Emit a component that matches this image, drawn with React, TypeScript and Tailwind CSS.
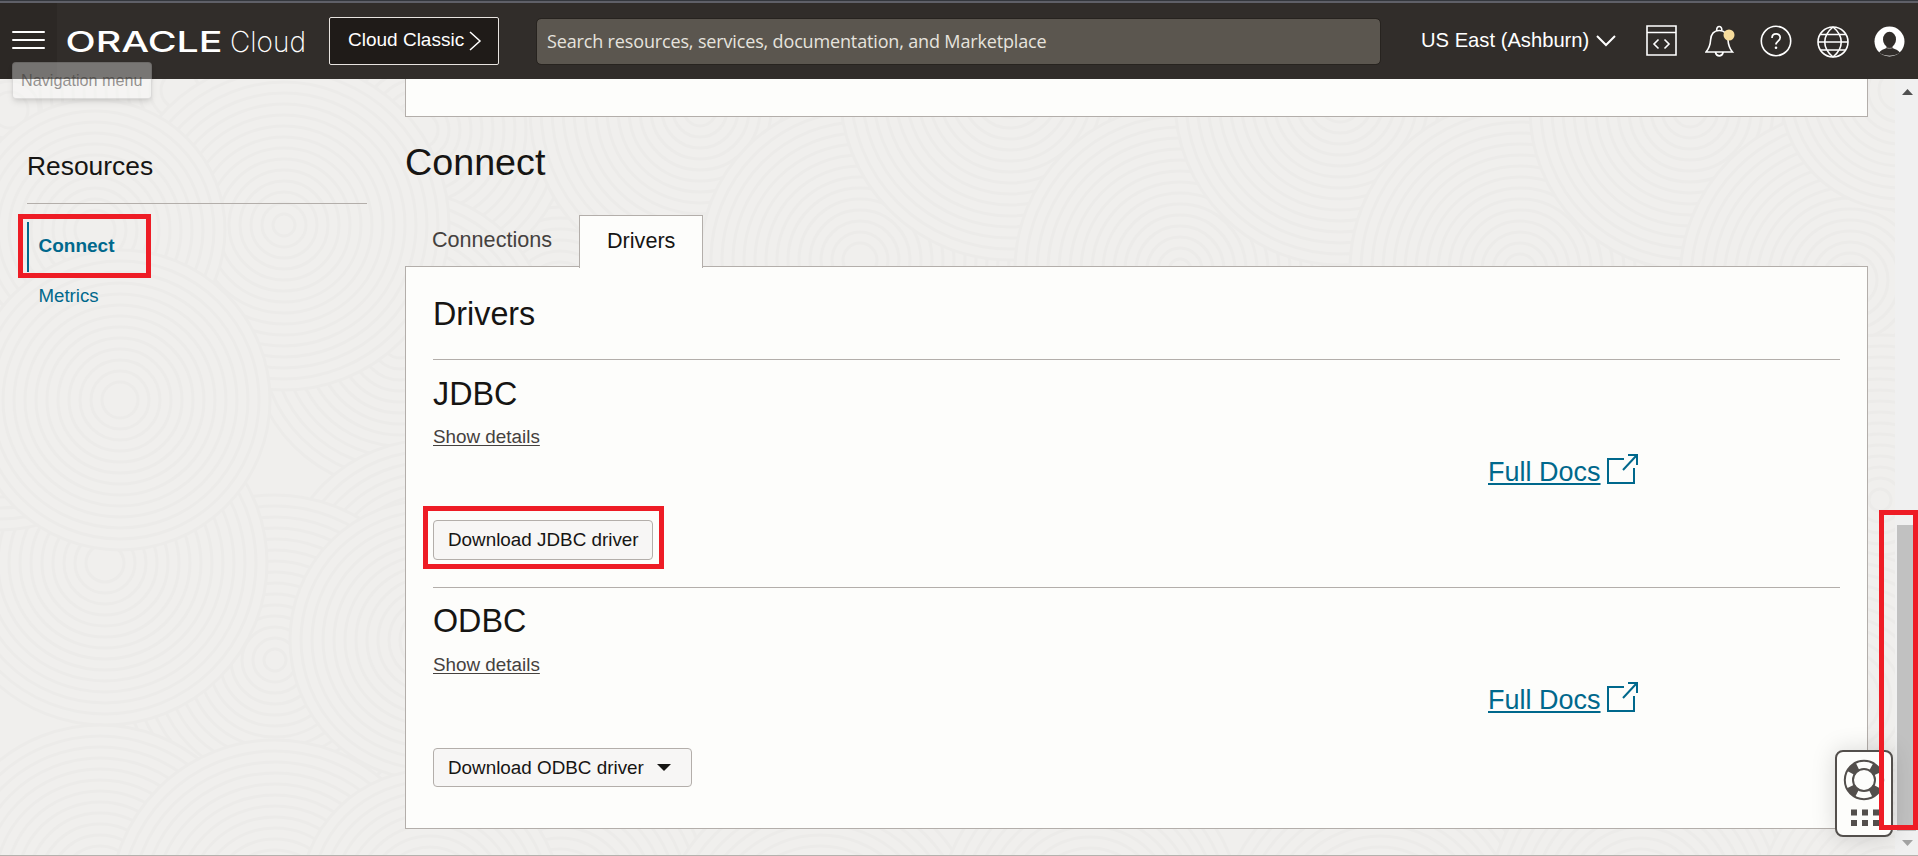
import React from "react";

const SWIRLS: [number, number, number][] = [
  [560, 300, 170], [420, 130, 150], [700, 110, 170], [860, 260, 160], [1010, 90, 170], [1180, 270, 165],
  [1340, 100, 165], [1520, 270, 170], [1690, 110, 160], [1850, 280, 170], [1900, 90, 120], [1880, 500, 165],
  [1840, 700, 150], [560, 900, 150], [820, 940, 160], [1090, 910, 150], [1380, 930, 160], [1640, 900, 150],
  [1890, 900, 130], [400, 340, 150], [430, 590, 150], [10, 110, 150], [180, 90, 140], [275, 660, 165],
  [105, 563, 162], [0, 380, 150], [284, 225, 165], [95, 230, 130], [120, 400, 150], [430, 640, 140],
  [100, 885, 160], [275, 905, 165], [430, 900, 130],
];

function Backdrop() {
  return (
    <svg className="absolute inset-0 h-full w-full" viewBox="0 0 1918 856" aria-hidden="true">
      {SWIRLS.map(([x, y, r], i) => (
        <g key={i} fill="none" stroke="#ecebe9" strokeWidth="3">
          <circle cx={x} cy={y} r={r} fill="#f0efed" />
          {Array.from({ length: Math.floor(r / 11) - 1 }, (_, k) => (
            <circle key={k} cx={x} cy={y} r={r - 11 * (k + 1)} />
          ))}
        </g>
      ))}
    </svg>
  );
}

function Logo() {
  return (
    <svg className="ml-[6px] shrink-0" width="250" height="48" viewBox="-4 -4 250 48" fill="#fff" aria-label="Oracle Cloud">
      <text x="-1.500" y="30.5" fontFamily="Inter, sans-serif" fontWeight="500" fontSize="28" textLength="157" lengthAdjust="spacingAndGlyphs">ORACLE</text>
      <text x="163" y="30.5" fontFamily="Inter, sans-serif" fontWeight="200" fontSize="29" textLength="76" lengthAdjust="spacingAndGlyphs">Cloud</text>
    </svg>
  );
}

function Header() {
  return (
    <header className="relative z-10 h-[79px] bg-[#312d2a] text-white">
      <div className="h-px bg-[#34373d]" />
      <div className="h-[2px] bg-[#5f6068]" />
      <div className="flex h-[76px] items-center">
        <button className="flex h-full w-[57px] shrink-0 flex-col justify-center gap-[6px] bg-[#2c2825] pb-[2px] pl-3" aria-label="Navigation menu">
          <span className="h-[2px] w-[33px] rounded-full bg-white" />
          <span className="h-[2px] w-[33px] rounded-full bg-white" />
          <span className="h-[2px] w-[33px] rounded-full bg-white" />
        </button>
        <Logo />
        <button className="ml-[16px] flex h-12 w-[170px] shrink-0 items-center rounded-[2px] border border-[#e8e4e0] bg-[#1f1b18] pl-[18px] text-[19px]">
          <span className="-mt-px">Cloud Classic</span>
          <svg className="ml-[5px]" width="13" height="20" viewBox="0 0 13 20" fill="none" stroke="#fff" strokeWidth="1.5"><path d="M1 1l10 9-10 9" /></svg>
        </button>
        <div className="ml-[38px] flex h-[45px] w-[843px] shrink-0 items-center rounded-[4px] bg-[#5b564f] pl-[10px] font-['Open_Sans',sans-serif] text-[18px] tracking-[-0.15px] text-[#e6e3de] outline outline-[#27231f]">
          <span className="whitespace-nowrap">Search resources, services, documentation, and Marketplace</span>
        </div>
        <span className="-mt-[2px] ml-[41px] w-[175px] shrink-0 text-[20.2px] whitespace-nowrap">US East (Ashburn)</span>
        <svg className="shrink-0" width="20" height="12" viewBox="0 0 20 12" fill="none" stroke="#fff" strokeWidth="2"><path d="M1 1l9 9 9-9" /></svg>
        <svg className="-mt-[2px] ml-[30px] shrink-0" width="31" height="31" viewBox="0 0 31 31" fill="none" stroke="#fff" strokeWidth="1.6">
          <path d="M1 1h29v29H1zM1 7.500h29M12.500 14.500L8 19l4.500 4.500M18.500 14.500L23 19l-4.500 4.500" />
        </svg>
        <svg className="ml-[28px] shrink-0" width="30" height="32" viewBox="0 0 30 32" fill="none" stroke="#fff" strokeWidth="1.6">
          <path d="M1 27h26.500c-3-3.500-4.200-7-4.500-12-.4-5.500-3.200-9.500-8.700-9.500S6 9.500 5.600 15c-.3 5-1.600 8.500-4.600 12zM11.800 5.500C11 .200 17.500.200 16.700 5.500M10.500 27.500c1 4.500 6.600 4.500 7.600 0" />
          <circle cx="24" cy="10" r="5.500" fill="#f7dc9c" stroke="none" />
        </svg>
        <svg className="ml-[25px] shrink-0" width="32" height="32" viewBox="0 0 32 32" fill="none" stroke="#fff" strokeWidth="1.6">
          <circle cx="16" cy="16" r="14.700" />
          <path d="M12 13c0-5.500 8.200-5.500 8.200-.4 0 3.600-4.200 3.500-4.200 7" strokeWidth="1.700" />
          <circle cx="16" cy="22.700" r="1.300" fill="#fff" stroke="none" />
        </svg>
        <svg className="mt-[1px] ml-[25px] shrink-0" width="32" height="32" viewBox="0 0 32 32" fill="none" stroke="#fff" strokeWidth="1.600">
          <circle cx="16" cy="16" r="15" />
          <path d="M1 16h30M3.500 8.500h25M3.500 24h25M16 1C5 10 5 22 16 31M16 1c11 9 11 21 0 30" />
        </svg>
        <svg className="ml-[25px] shrink-0" width="31" height="31" viewBox="0 0 31 31">
          <circle cx="15.500" cy="15.500" r="15" fill="#fff" />
          <ellipse cx="15.500" cy="13.500" rx="6.500" ry="7.800" fill="#312d2a" />
          <path d="M5 26.500c2-2.500 4.500-3.200 7.500-4.500v-2.500h6V22c3 1.300 5.500 2 7.500 4.500-6 4.300-15 4.300-21 0z" fill="#312d2a" />
          <path d="M12 21.500c2 1.200 5 1.200 7 0" fill="none" stroke="#a8a5a2" strokeWidth="0.800" />
        </svg>
      </div>
      <div className="absolute top-[62px] left-3 h-[37px] w-[140px] rounded-[4px] border border-black/10 bg-white/35 pl-[8px] text-[16.2px] leading-[35px] whitespace-nowrap text-[#312d2a]/50 shadow-md">Navigation menu</div>
    </header>
  );
}

function Sidebar() {
  return (
    <aside className="w-[367px] shrink-0 pl-[27px]">
      <h2 className="mt-[48px] h-[77px] border-b border-[#b3aeaa] text-[26.4px] leading-[78px]">Resources</h2>
      <nav className="mt-[18px] text-[18.67px] text-[#00688c]">
        <div className="relative h-[50px] border-l-2 border-[#00688c] pl-[9.500px] text-[19px] leading-[48px] font-bold">
          Connect
          <span className="absolute -top-[8px] -left-[11px] h-[64px] w-[133px] border-5 border-[#ee1c25]" />
        </div>
        <div className="h-[48px] pl-[11.500px] leading-[48px]">Metrics</div>
      </nav>
    </aside>
  );
}

function DriverSection({ name, last = false, children }: { name: string; last?: boolean; children: React.ReactNode }) {
  return (
    <section className={last ? "h-[240px]" : "h-[228px] border-b border-[#b3aeaa]"}>
      <h3 className={last ? "h-[66px] text-[32.3px] leading-[66px]" : "h-[66px] text-[32.3px] leading-[68px]"}>{name}</h3>
      <a className="block h-[22px] w-fit text-[18.85px] leading-[22px] text-[#45413e] underline decoration-1 underline-offset-2">Show details</a>
      <div className="flex h-[48px] pl-[1055px] text-[#00688c]">
        <a className="text-[27px] leading-[48px] underline decoration-2 underline-offset-2">Full Docs</a>
        <svg className="mt-[6px] ml-[6px]" width="31" height="31" viewBox="0 0 31 31" fill="none" stroke="#00688c" strokeWidth="2">
          <path d="M17 5H1v24h26V14M16 16L29 2M21 1h9v10" />
        </svg>
      </div>
      <div className="mt-[24px] text-[18.85px]">{children}</div>
    </section>
  );
}

export default function App() {
  return (
    <div className="relative h-[856px] w-[1918px] overflow-hidden bg-[#f0efed] font-['Liberation_Sans',Arial,sans-serif] text-[#161513]">
      <Backdrop />
      <Header />
      <div className="relative flex h-[777px] border-b border-[#b5b2ae]">
        <Sidebar />
        <main className="ml-[38px] w-[1463px] shrink-0">
          <div className="h-[38px] border border-t-0 border-[#b3aeaa] bg-[#fdfdfb]" />
          <h1 className="h-[98px] text-[37.7px] leading-[90px]">Connect</h1>
          <div className="relative z-[1] -mb-[2px] flex h-[53px] text-[21.6px]">
            <div className="w-[174px] pl-[27px] leading-[50px] text-[#45413e]">Connections</div>
            <div className="w-[124px] border border-b-0 border-[#b3aeaa] bg-[#fdfdfb] pl-[27px] leading-[50px]">Drivers</div>
          </div>
          <div className="h-[563px] border border-[#b3aeaa] bg-[#fdfdfb] px-[27px]">
            <h2 className="h-[93px] border-b border-[#b3aeaa] text-[32.3px] leading-[94px]">Drivers</h2>
            <DriverSection name="JDBC">
              <button className="relative block h-10 w-[220px] rounded-[4px] border border-[#b3aeaa] bg-[#f7f6f5] pl-[14px] text-left leading-[36px] whitespace-nowrap">
                Download JDBC driver
                <span className="absolute -top-[15px] -left-[11px] h-[63px] w-[241px] border-5 border-[#ee1c25]" />
              </button>
            </DriverSection>
            <DriverSection name="ODBC" last>
              <button className="flex h-[39px] w-[259px] items-center rounded-[4px] border border-[#b3aeaa] bg-[#f7f6f5] pl-[14px] leading-[36px]">
                Download ODBC driver
                <svg className="ml-[13px]" width="14" height="7" viewBox="0 0 14 7"><path d="M0 0h14L7 7z" fill="#161513" /></svg>
              </button>
            </DriverSection>
          </div>
        </main>
        <div className="ml-[27px] flex w-[23px] shrink-0 flex-col bg-[#f0f0f0] pl-[2px]">
          <svg className="mt-[10px] ml-[5px]" width="11" height="6" viewBox="0 0 11 6"><path d="M0 6h11L5.500 0z" fill="#505050" /></svg>
          <div className="mt-[430px] h-[306px] w-[19px] bg-[#c1c1c1]" />
          <svg className="mt-[9px] ml-[5px]" width="11" height="6" viewBox="0 0 11 6"><path d="M0 0h11L5.500 6z" fill="#a3a3a3" /></svg>
        </div>
      </div>
      <div className="absolute top-[750px] left-[1835px] h-[87px] w-[58px] rounded-[8px] border-2 border-[#534f4c] bg-[#fdfdfb] shadow-[0_0_24px_rgba(0,0,0,0.15)]">
        <svg width="54" height="83" viewBox="0 0 54 83">
          <g fill="none" stroke="#534f4c">
            <circle cx="27" cy="28" r="15" strokeWidth="9" strokeDasharray="9.400 14.160" strokeDashoffset="-7.080" />
            <circle cx="27" cy="28" r="19.200" strokeWidth="2" />
            <circle cx="27" cy="28" r="11" strokeWidth="2" />
          </g>
          <path fill="#534f4c" d="M14 57.500h6v6h-6zM25 57.500h6v6h-6zM36 57.500h6v6h-6zM14 68h6v6h-6zM25 68h6v6h-6zM36 68h6v6h-6z" />
        </svg>
      </div>
      <div className="absolute top-[510px] left-[1879px] h-[320px] w-[39px] border-5 border-[#ee1c25]" />
    </div>
  );
}
